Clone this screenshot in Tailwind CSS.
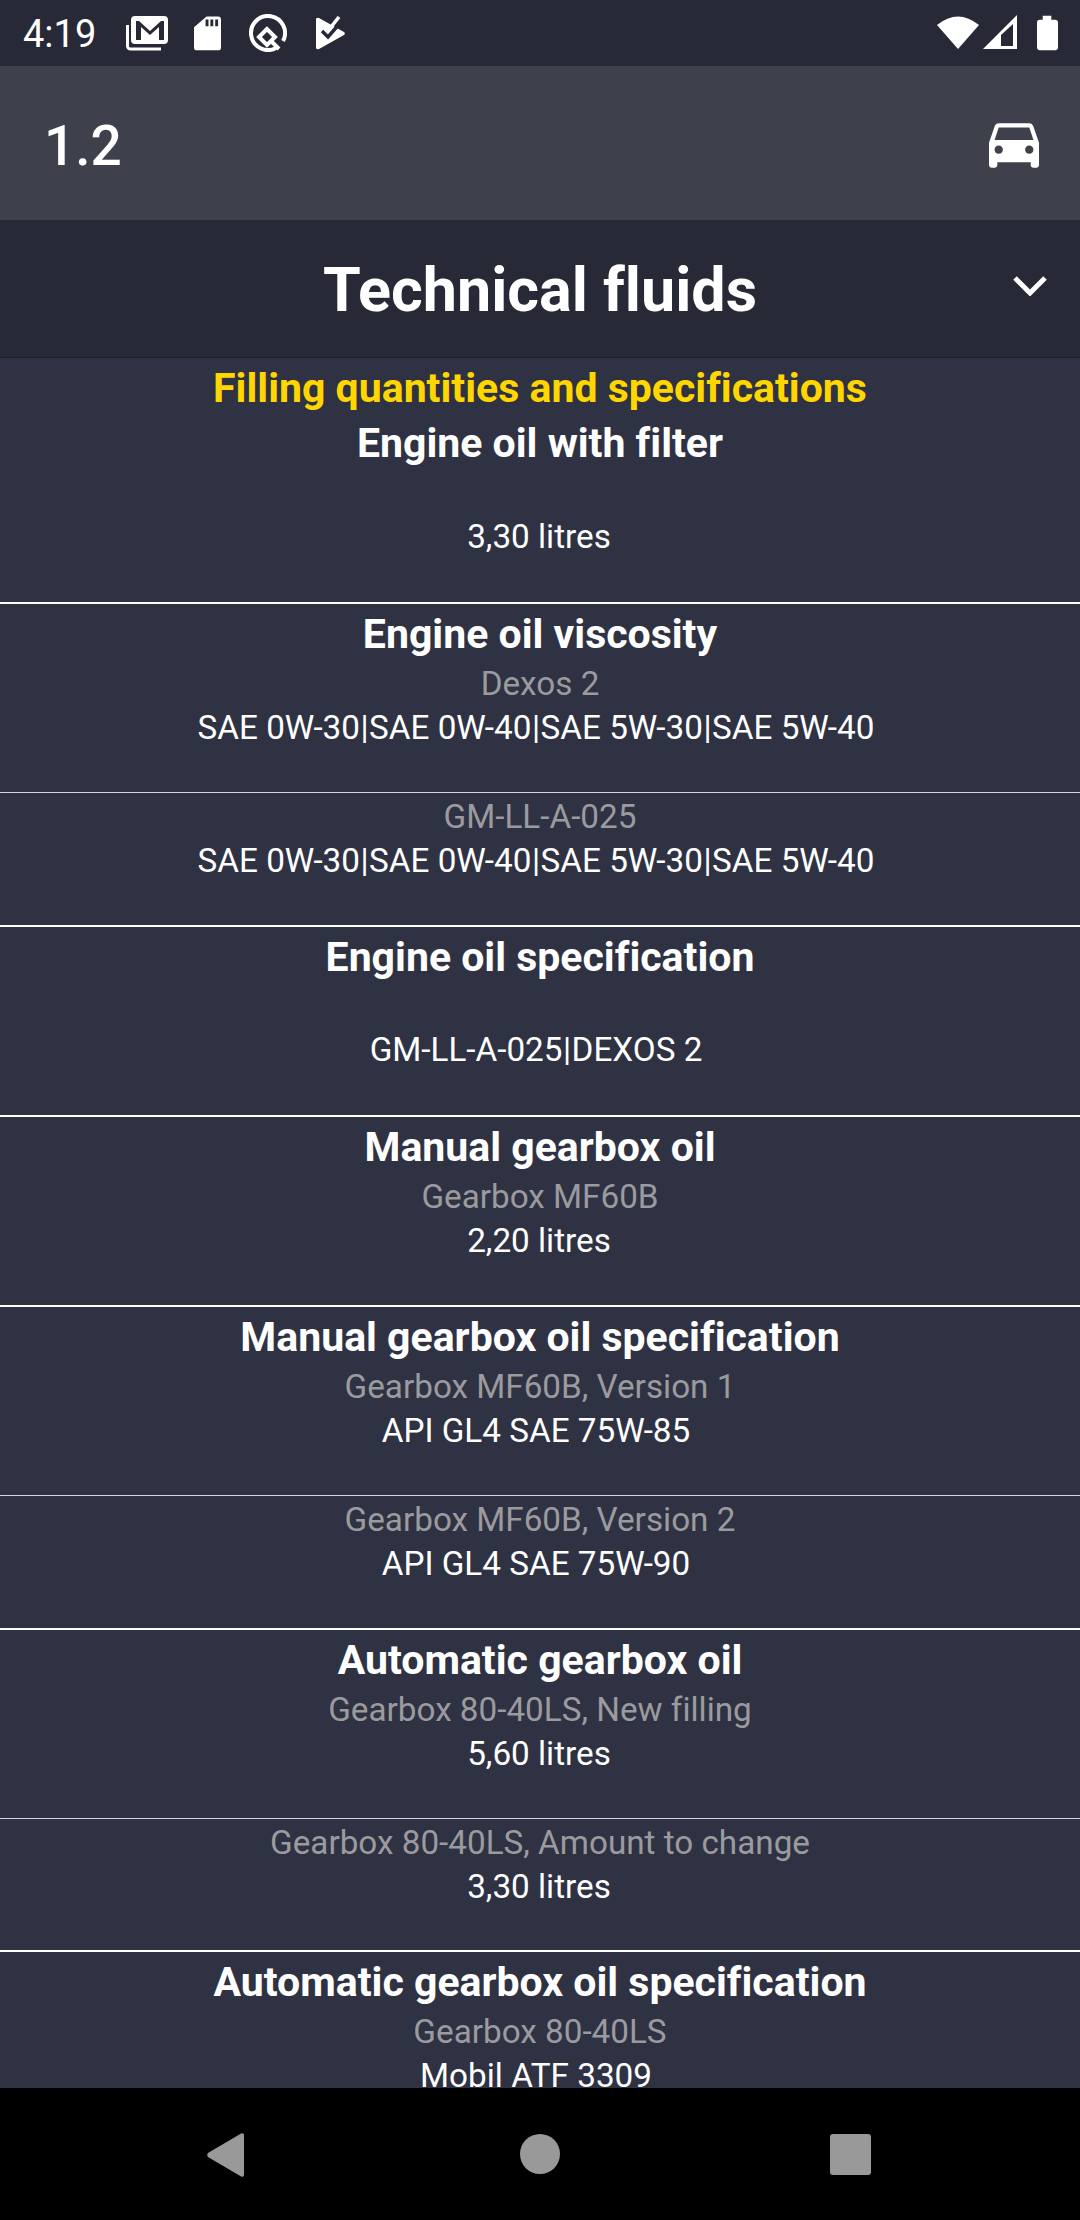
<!doctype html>
<html><head><meta charset="utf-8"><script src="https://cdn.jsdelivr.net/npm/@tailwindcss/browser@4"></script></head>
<body class="m-0 bg-black">
<div class="w-[1080px] h-[2220px] flex flex-col overflow-hidden font-['Roboto',sans-serif] text-white [font-variant-ligatures:none]">
  <div class="h-[66px] shrink-0 bg-[#272936] flex items-center justify-between pl-[23px] pr-[22px]">
    <div class="flex items-center">
      <span class="text-[38px] leading-none w-[103px] mt-[2px]">4:19</span>
      <svg class="w-[42px] h-[36px] mr-[26px]" viewBox="0 0 42 36"><path fill="#fff" d="M9 1h29a4 4 0 0 1 4 4v20a4 4 0 0 1-4 4H9a4 4 0 0 1-4-4V5a4 4 0 0 1 4-4zM10 6v19h5V12l9 8 9-8v13h5V6h-3l-11 10L13 6z" fill-rule="evenodd"/><path fill="none" stroke="#fff" stroke-width="3" d="M1.500 10v21a3 3 0 0 0 3 3H35"/></svg>
      <svg class="w-[27px] h-[36px] mr-[28px]" viewBox="0 0 28 36"><path fill="#fff" fill-rule="evenodd" d="M13 1h12a3 3 0 0 1 3 3v29a3 3 0 0 1-3 3H3a3 3 0 0 1-3-3V12zM12 4v7h3V4zM17 4v7h3V4zM22 4v7h3V4z"/></svg>
      <svg class="w-[38px] h-[38px] mr-[29px]" viewBox="0 0 38 38" fill="none" stroke="#fff"><path stroke-width="4" d="M27 34A17 17 0 1 1 34 27"/><path stroke-width="4" d="M18 15l-8 8 8 8 8-8zM22 27l8 8"/></svg>
      <svg class="w-[30px] h-[34px]" viewBox="0 0 30 34"><path fill="#fff" d="M0 4a2 2 0 0 1 3-2l25 14a2 2 0 0 1 0 3L3 33a2 2 0 0 1-3-2z"/><path fill="none" stroke="#272936" stroke-width="3.500" d="M6 15l6 6 13-15"/><path fill="none" stroke="#fff" stroke-width="3.500" d="M15 11l8-10"/></svg>
    </div>
    <div class="flex items-center">
      <svg class="w-[42px] h-[36px] mr-[4px]" viewBox="0 0 42 36"><path fill="#fff" d="M0 10Q21-7 42 10L21 34z"/></svg>
      <svg class="w-[34px] h-[36px] mr-[20px]" viewBox="0 0 34 36"><path fill="#fff" fill-rule="evenodd" d="M0 34L34 0v34zM18 31h12V9L18 20z"/></svg>
      <svg class="w-[21px] h-[36px]" viewBox="0 0 22 36"><path fill="#fff" d="M6 0h9v4h4a3 3 0 0 1 3 3v26a3 3 0 0 1-3 3H3a3 3 0 0 1-3-3V7a3 3 0 0 1 3-3h3z"/></svg>
    </div>
  </div>
  <div class="h-[154px] shrink-0 bg-[#3e404c] flex items-center justify-between pl-[44px] pr-[41px]">
    <span class="text-[55px] leading-none font-medium mt-[6px]">1.2</span>
    <svg class="w-[50px] h-[45px] mt-[5px]" viewBox="3 5 18 16"><path fill="#fff" d="M18.920 6.010C18.720 5.420 18.160 5 17.500 5h-11c-.66 0-1.210.42-1.420 1.010L3 12v8c0 .55.45 1 1 1h1c.55 0 1-.45 1-1v-1h12v1c0 .55.45 1 1 1h1c.55 0 1-.45 1-1v-8l-2.080-5.990zM6.500 16c-.83 0-1.500-.67-1.500-1.500S5.670 13 6.500 13s1.500.67 1.500 1.500S7.330 16 6.500 16zm11 0c-.83 0-1.500-.67-1.500-1.500s.67-1.500 1.500-1.500 1.500.67 1.500 1.500-.67 1.500-1.500 1.500zM5 11l1.500-4.500h11L19 11H5z"/></svg>
  </div>
  <div class="h-[138px] shrink-0 bg-[#272936] relative flex items-center justify-center border-b border-[#1f2029]">
    <span class="text-[61px] leading-none font-bold mt-[4px]">Technical fluids</span>
    <svg class="absolute left-[1013px] top-[56px] w-[34px] h-[20px]" viewBox="0 0 34 20" fill="none" stroke="#fff" stroke-width="5"><path d="M2 2l15 15L32 2"/></svg>
  </div>
  <div class="flex-1 min-h-0 overflow-hidden bg-[#2f3243] text-center">
    <div class="text-[41px] leading-[60px] font-bold text-[#ffd600]">Filling quantities and specifications</div>
    <div class="h-[186px] border-b-2 border-white">
      <div class="text-[41px] leading-[50px] font-bold">Engine oil with filter</div>
      <div class="text-[33.250px] leading-[44px] mt-[47px] pr-[2px]">3,30 litres</div>
    </div>
    <div class="h-[189px] border-b border-white/80 pt-[3px]">
      <div class="text-[41px] leading-[54px] font-bold mb-[1px]">Engine oil viscosity</div>
      <div class="text-[33.250px] leading-[44px] text-[#9b9b9f]">Dexos 2</div>
      <div class="text-[33.250px] leading-[44px] pr-[8px]">SAE 0W-30<span class="px-[0.5px]">|</span>SAE 0W-40<span class="px-[0.5px]">|</span>SAE 5W-30<span class="px-[0.5px]">|</span>SAE 5W-40</div>
    </div>
    <div class="h-[134px] border-b-2 border-white pt-[2px]">
      <div class="text-[33.250px] leading-[44px] text-[#9b9b9f]">GM-LL-A-025</div>
      <div class="text-[33.250px] leading-[44px] pr-[8px]">SAE 0W-30<span class="px-[0.5px]">|</span>SAE 0W-40<span class="px-[0.5px]">|</span>SAE 5W-30<span class="px-[0.5px]">|</span>SAE 5W-40</div>
    </div>
    <div class="h-[190px] border-b-2 border-white pt-[3px]">
      <div class="text-[41px] leading-[54px] font-bold mb-[1px]">Engine oil specification</div>
      <div class="text-[33.250px] leading-[44px] mt-[44px] pr-[8px]">GM-LL-A-025<span class="px-[0.5px]">|</span>DEXOS 2</div>
    </div>
    <div class="h-[190px] border-b-2 border-white pt-[3px]">
      <div class="text-[41px] leading-[54px] font-bold mb-[1px]">Manual gearbox oil</div>
      <div class="text-[33.250px] leading-[44px] text-[#9b9b9f]">Gearbox MF60B</div>
      <div class="text-[33.250px] leading-[44px] pr-[2px]">2,20 litres</div>
    </div>
    <div class="h-[189px] border-b border-white/80 pt-[3px]">
      <div class="text-[41px] leading-[54px] font-bold mb-[1px]">Manual gearbox oil specification</div>
      <div class="text-[33.250px] leading-[44px] text-[#9b9b9f]">Gearbox MF60B, Version 1</div>
      <div class="text-[33.250px] leading-[44px] pr-[8px]">API GL4 SAE 75W-85</div>
    </div>
    <div class="h-[134px] border-b-2 border-white pt-[2px]">
      <div class="text-[33.250px] leading-[44px] text-[#9b9b9f]">Gearbox MF60B, Version 2</div>
      <div class="text-[33.250px] leading-[44px] pr-[8px]">API GL4 SAE 75W-90</div>
    </div>
    <div class="h-[189px] border-b border-white/80 pt-[3px]">
      <div class="text-[41px] leading-[54px] font-bold mb-[1px]">Automatic gearbox oil</div>
      <div class="text-[33.250px] leading-[44px] text-[#9b9b9f]">Gearbox 80-40LS, New filling</div>
      <div class="text-[33.250px] leading-[44px] pr-[2px]">5,60 litres</div>
    </div>
    <div class="h-[133px] border-b-2 border-white pt-[2px]">
      <div class="text-[33.250px] leading-[44px] text-[#9b9b9f]">Gearbox 80-40LS, Amount to change</div>
      <div class="text-[33.250px] leading-[44px] pr-[2px]">3,30 litres</div>
    </div>
    <div class="pt-[3px]">
      <div class="text-[41px] leading-[54px] font-bold mb-[1px]">Automatic gearbox oil specification</div>
      <div class="text-[33.250px] leading-[44px] text-[#9b9b9f]">Gearbox 80-40LS</div>
      <div class="text-[33.250px] leading-[44px] pr-[8px]">Mobil ATF 3309</div>
    </div>
  </div>
  <div class="h-[132px] shrink-0 bg-black relative">
    <svg class="absolute left-[206px] top-[44px] w-[39px] h-[46px]" viewBox="0 0 40 46"><path fill="#999" d="M36 1a2 2 0 0 1 3 2v40a2 2 0 0 1-3 2L2 25a3 3 0 0 1 0-4z"/></svg>
    <div class="absolute left-[520px] top-[46px] w-[40px] h-[40px] rounded-full bg-[#999]"></div>
    <div class="absolute left-[830px] top-[46px] w-[41px] h-[41px] rounded-[3px] bg-[#999]"></div>
  </div>
</div>
</body></html>
